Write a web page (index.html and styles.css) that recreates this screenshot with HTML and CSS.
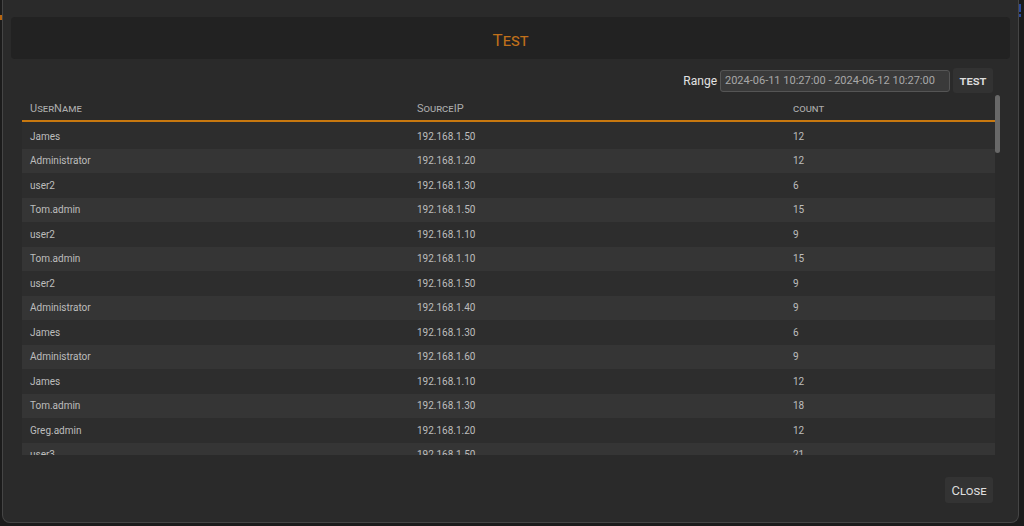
FILE: index.html
```html
<!DOCTYPE html>
<html lang="en">
  <head>
    <meta charset="UTF-8" />
    <meta name="viewport" content="width=device-width, initial-scale=1.0" />
    <title>Test</title>
    <link rel="stylesheet" href="styles.css">
  </head>
  <body>
    <span class="edge-mark orange"></span>
    <span class="edge-mark blue"></span>
    <span class="edge-mark blue second"></span>
    <div class="modal">
      <div class="modal-header">
        <h3 class="modal-title">Test</h3>
      </div>
      <div class="toolbar">
        <label for="range" class="range-label">Range</label>
        <input
          autocomplete="off"
          type="text"
          name="range"
          id="range"
          class="range-input"
          value="2024-06-11 10:27:00 - 2024-06-12 10:27:00"
        />
        <button class="dark-btn test-btn" type="button">test</button>
      </div>
      <div class="table-area">
        <div class="table-wrap">
          <table class="data-table">
            <thead>
              <tr>
                <th class="col-user">UserName</th>
                <th class="col-ip">SourceIP</th>
                <th>count</th>
              </tr>
            </thead>
            <tbody>
              <tr><td>James</td><td>192.168.1.50</td><td>12</td></tr>
              <tr><td>Administrator</td><td>192.168.1.20</td><td>12</td></tr>
              <tr><td>user2</td><td>192.168.1.30</td><td>6</td></tr>
              <tr><td>Tom.admin</td><td>192.168.1.50</td><td>15</td></tr>
              <tr><td>user2</td><td>192.168.1.10</td><td>9</td></tr>
              <tr><td>Tom.admin</td><td>192.168.1.10</td><td>15</td></tr>
              <tr><td>user2</td><td>192.168.1.50</td><td>9</td></tr>
              <tr><td>Administrator</td><td>192.168.1.40</td><td>9</td></tr>
              <tr><td>James</td><td>192.168.1.30</td><td>6</td></tr>
              <tr><td>Administrator</td><td>192.168.1.60</td><td>9</td></tr>
              <tr><td>James</td><td>192.168.1.10</td><td>12</td></tr>
              <tr><td>Tom.admin</td><td>192.168.1.30</td><td>18</td></tr>
              <tr><td>Greg.admin</td><td>192.168.1.20</td><td>12</td></tr>
              <tr><td>user3</td><td>192.168.1.50</td><td>21</td></tr>
            </tbody>
          </table>
        </div>
        <div class="scroll-track">
          <div class="scroll-thumb"></div>
        </div>
      </div>
      <div class="modal-footer">
        <button class="dark-btn close-btn" type="button">Close</button>
      </div>
    </div>
  </body>
</html>
```

FILE: styles.css
```css
html,
body {
  margin: 0;
  height: 100%;
  overflow: hidden;
}
body {
  background-color: #1b1b1b;
  font-family: Roboto, "Liberation Sans", sans-serif;
  position: relative;
}
.edge-mark {
  position: absolute;
  width: 2px;
}
.edge-mark.orange {
  left: 0;
  top: 15px;
  height: 5px;
  background-color: #b8650f;
}
.edge-mark.blue {
  right: 3px;
  top: 4px;
  height: 8px;
  background-color: #2c4a9a;
}
.edge-mark.blue.second {
  top: 14px;
  height: 3px;
}
.modal {
  margin-left: 2px;
  width: 1015px;
  height: 522px;
  background-color: #2a2a2a;
  border: 1px solid #454545;
  border-top: none;
  border-radius: 0 0 8px 8px;
  display: flex;
  flex-direction: column;
}
.modal-header {
  margin: 17px 8px 0 8px;
  height: 42px;
  box-sizing: border-box;
  padding-top: 3px;
  background-color: #222222;
  border-radius: 4px;
  display: flex;
  align-items: center;
  justify-content: center;
}
.modal-title {
  margin: 0;
  font-size: 17px;
  font-weight: 400;
  font-variant: small-caps;
  color: #c0701a;
}
.toolbar {
  margin-top: 9px;
  height: 25px;
  padding-right: 25px;
  display: flex;
  align-items: center;
  justify-content: flex-end;
}
.range-label {
  font-size: 12px;
  color: #e2e2e2;
  margin-right: 3px;
}
.range-input {
  box-sizing: border-box;
  width: 230px;
  height: 22px;
  padding: 0 4px;
  background-color: #3a3a3a;
  border: 1px solid #555555;
  border-radius: 3px;
  color: #a8a8a8;
  font-family: inherit;
  font-size: 11px;
  outline: none;
}
.dark-btn {
  border: none;
  border-radius: 3px;
  background-color: #323232;
  color: #dddddd;
  font-family: inherit;
  font-size: 13px;
  font-variant: small-caps;
  padding: 0;
  cursor: pointer;
}
.test-btn {
  width: 40px;
  height: 25px;
  margin-left: 3px;
  font-weight: 500;
}
.table-area {
  margin: 1px 17px 0 19px;
  height: 361px;
  display: flex;
}
.table-wrap {
  flex: 1;
  overflow: hidden;
}
.scroll-track {
  width: 6px;
  padding-top: 1px;
}
.scroll-thumb {
  width: 5px;
  height: 58px;
  background-color: #686868;
  border-radius: 3px;
}
.data-table {
  width: 100%;
  border-collapse: collapse;
  table-layout: fixed;
}
.data-table th {
  height: 28px;
  padding: 0 8px;
  text-align: left;
  font-size: 11px;
  font-weight: 400;
  font-variant: small-caps;
  color: #acacac;
  background-color: #2a2a2a;
  box-shadow: inset 0 -2px 0 #c8780f;
  box-sizing: border-box;
}
.col-user {
  width: 387px;
}
.col-ip {
  width: 376px;
}
.data-table td {
  height: 24.5px;
  padding: 0 8px;
  font-size: 10px;
  color: #bdbdbd;
  box-sizing: border-box;
  white-space: nowrap;
}
.data-table tbody tr:first-child td {
  height: 26.5px;
  padding-top: 2px;
}
.data-table tbody tr:nth-child(odd) {
  background-color: #2d2d2d;
}
.data-table tbody tr:nth-child(even) {
  background-color: #353535;
}
.modal-footer {
  margin-top: 22px;
  padding-right: 25px;
  display: flex;
  justify-content: flex-end;
}
.close-btn {
  width: 48px;
  height: 26px;
  background-color: #333333;
}
```
